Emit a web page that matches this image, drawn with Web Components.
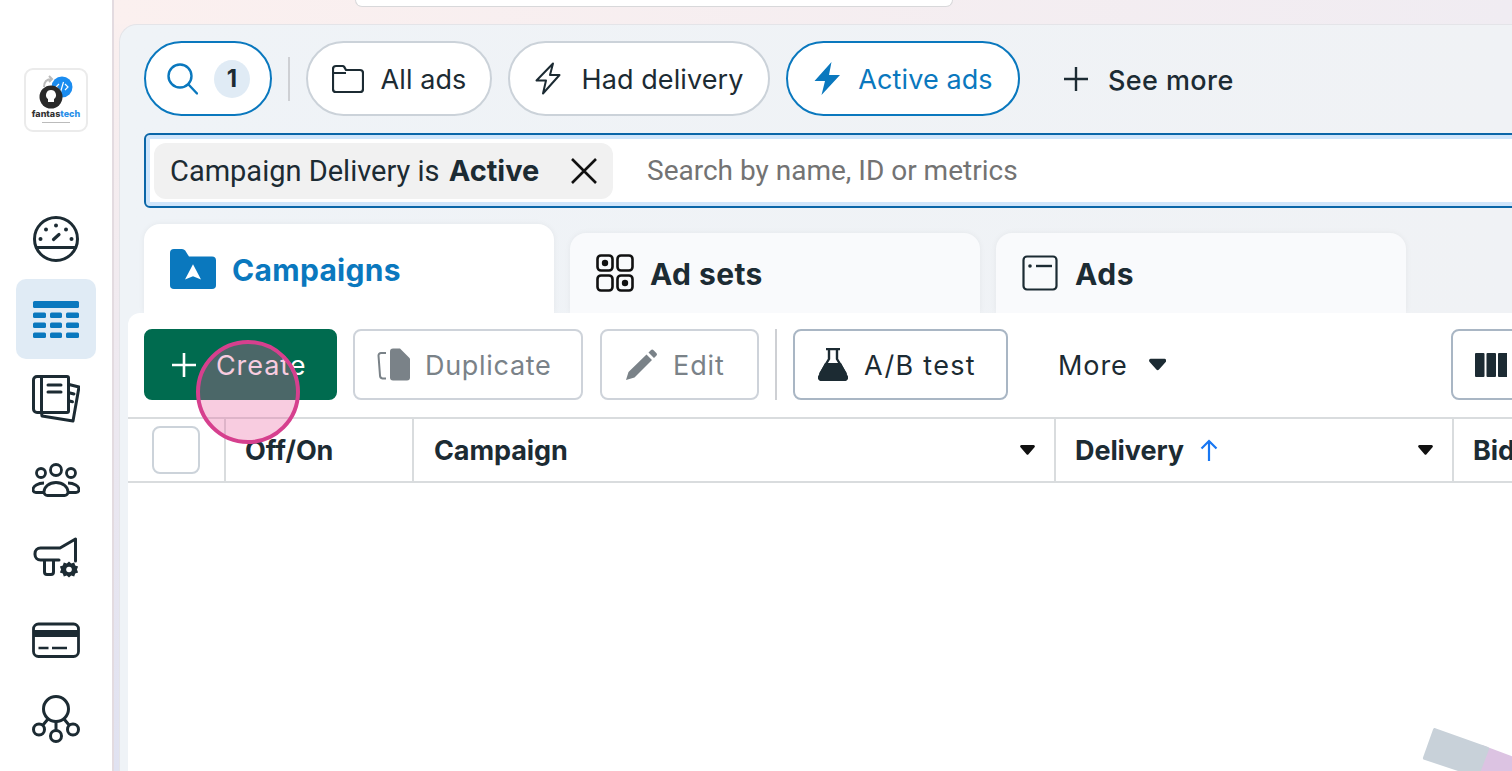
<!DOCTYPE html>
<html lang="en">
<head>
<meta charset="utf-8">
<title>Ads Manager</title>
<style>
  html, body { margin: 0; height: 100%; overflow: hidden; background: #fff; }
  body { font-family: Inter, "Liberation Sans", sans-serif; color: #1c2b33; }
  svg { display: block; }
</style>
</head>
<body>
<ads-app>
  <ads-sidebar slot="side">
    <ads-logo></ads-logo>
    <side-item>
      <svg width="48" height="48" viewBox="0 0 48 48" fill="none" stroke="#1c2b33" stroke-width="3"><circle cx="24" cy="24" r="21.5"/><path d="M3.5 32.5h41"/><path d="M21.5 24.5l5.5-5" stroke-linecap="round" stroke-width="3.2"/><g fill="#1c2b33" stroke="none"><circle cx="8.5" cy="24" r="2"/><circle cx="14" cy="14.5" r="2"/><circle cx="24" cy="10.5" r="2"/><circle cx="34" cy="14.5" r="2"/><circle cx="39.5" cy="24" r="2"/></g></svg>
    </side-item>
    <side-item active>
      <svg width="48" height="48" viewBox="0 0 48 48" fill="#0a78be"><rect x="1" y="6" width="46" height="7" rx="1.5"/><rect x="1" y="17.500" width="13" height="5.600" rx="1.500"/><rect x="18" y="17.500" width="12" height="5.600" rx="1.500"/><rect x="34" y="17.500" width="13" height="5.600" rx="1.500"/><rect x="1" y="27.500" width="13" height="5.600" rx="1.500"/><rect x="18" y="27.500" width="12" height="5.600" rx="1.500"/><rect x="34" y="27.500" width="13" height="5.600" rx="1.500"/><rect x="1" y="37.500" width="13" height="5.600" rx="1.500"/><rect x="18" y="37.500" width="12" height="5.600" rx="1.500"/><rect x="34" y="37.500" width="13" height="5.600" rx="1.500"/></svg>
    </side-item>
    <side-item>
      <svg width="48" height="48" viewBox="0 0 48 48" fill="none" stroke="#1c2b33" stroke-width="3" stroke-linejoin="round" stroke-linecap="round"><path d="M35 1.500H5a3.500 3.500 0 0 0-3.500 3.500v29a3.500 3.500 0 0 0 3.500 3.500h30a1.500 1.500 0 0 0 1.500-1.500V3a1.500 1.500 0 0 0-1.500-1.500z"/><path d="M9.500 2v35"/><path d="M16 10h13M16 17h13"/><path d="M37 9.500l10 2.500-6 34-31-5-.5-3.500"/><path d="M38 18l4 1M37.500 26l3 .8"/></svg>
    </side-item>
    <side-item>
      <svg width="48" height="48" viewBox="0 0 48 48" fill="none" stroke="#1c2b33" stroke-width="2.800"><circle cx="24" cy="15" r="5.500"/><circle cx="9" cy="18" r="4.500"/><circle cx="39" cy="18" r="4.500"/><path d="M15.500 40.500h17a3.500 3.500 0 0 0 3.500-3.500c0-5-5-9.500-12-9.500s-12 4.500-12 9.500a3.500 3.500 0 0 0 3.500 3.500z"/><path d="M12 28c-6 0-11 3-11 6.500 0 2 1.500 3 3 3h7"/><path d="M36 28c6 0 11 3 11 6.500 0 2-1.500 3-3 3h-7"/></svg>
    </side-item>
    <side-item>
      <svg width="48" height="48" viewBox="0 0 48 48" fill="none" stroke="#1c2b33" stroke-width="3" stroke-linejoin="round" stroke-linecap="round"><path d="M27 25H8.500A5.500 5.500 0 0 1 3 19.500v-1A5.500 5.500 0 0 1 8.500 13H28L43.500 4V26"/><path d="M12.500 25.500V37a2.500 2.500 0 0 0 2.500 2.500h4a2.500 2.500 0 0 0 2.500-2.500V25.500"/><path d="M37 26.500l2.200 2 3-1 1 2.900 2.900 1.200-1.200 2.900 1.200 2.900-2.900 1.200-1 2.900-3-1-2.200 2-2.200-2-3 1-1-2.900-2.900-1.200 1.200-2.900-1.200-2.900 2.900-1.200 1-2.900 3 1z" fill="#1c2b33" stroke="none"/><circle cx="37" cy="34.500" r="2.800" fill="#fff" stroke="none"/></svg>
    </side-item>
    <side-item>
      <svg width="48" height="48" viewBox="0 0 48 48" fill="none" stroke="#1c2b33" stroke-width="2.800"><rect x="1.500" y="9" width="45" height="32.500" rx="5"/><path d="M1.500 18.500h45" stroke-width="7"/><path d="M6.500 33h10M20 33h15" stroke-width="2.600"/></svg>
    </side-item>
    <side-item>
      <svg width="48" height="48" viewBox="0 0 48 48" fill="none" stroke="#1c2b33" stroke-width="3"><circle cx="24" cy="14" r="12.500"/><circle cx="7" cy="34.500" r="5.500"/><circle cx="41" cy="34.500" r="5.500"/><circle cx="24" cy="41" r="5.500"/><path d="M24 26.500v9M16 24l-5 6M32 24l5 6"/></svg>
    </side-item>
  </ads-sidebar>

  <ads-panel slot="panel">
    <ads-filter-row slot="top">
      <filter-pill style="width:128px" active>
        <svg width="32" height="34" viewBox="0 0 32 34" fill="none" stroke="#0a78be" stroke-width="2.400" stroke-linecap="round"><circle cx="14" cy="14" r="11.500"/><path d="M22.500 22.500l8.500 9"/></svg>
        <count-badge style="margin-left:-1px">1</count-badge>
      </filter-pill>
      <row-divider></row-divider>
      <filter-pill style="width:186px">
        <svg width="32" height="30" viewBox="1 0 32 30" fill="none" stroke="#1c2b33" stroke-width="2.200" stroke-linejoin="round"><path d="M2 5a3 3 0 0 1 3-3h6.500a2 2 0 0 1 1.700.9L15 6h14a3 3 0 0 1 3 3v16a3 3 0 0 1-3 3H5a3 3 0 0 1-3-3z"/><path d="M2 9h13"/></svg>
        All ads
      </filter-pill>
      <filter-pill style="width:262px;gap:19px">
        <svg width="28" height="33" viewBox="0 0 28 33" fill="none" stroke="#1c2b33" stroke-width="2" stroke-linejoin="round"><path d="M19 1.500L2.500 18.500H12L9 31.500 25.500 13H16z"/></svg>
        Had delivery
      </filter-pill>
      <filter-pill style="width:234px" active blue>
        <svg width="28" height="33" viewBox="0 0 28 33" fill="#0a78be"><path d="M18.500 0L1.500 19H12L8.500 33 27 13H16z"/></svg>
        Active ads
      </filter-pill>
      <see-more>See more</see-more>
    </ads-filter-row>

    <ads-search-box slot="top">
      <filter-chip>Campaign Delivery is <b>Active</b></filter-chip>
      Search by name, ID or metrics
    </ads-search-box>

    <ads-tabs slot="top">
      <ads-tab active>
        <svg width="46" height="40" viewBox="0 0 46 42" preserveAspectRatio="none"><path fill="#0a78be" d="M0 4a4 4 0 0 1 4-4h8a4 4 0 0 1 3.200 1.600L19 8h23a4 4 0 0 1 4 4v26a4 4 0 0 1-4 4H4a4 4 0 0 1-4-4z"/><path fill="#fff" d="M23 16l8 16-8-3.500-8 3.500z"/></svg>
        Campaigns
      </ads-tab>
      <ads-tab style="letter-spacing:.4px">
        <svg width="38" height="38" viewBox="0 0 38 38" fill="none" stroke="#111" stroke-width="2.600"><rect x="1.500" y="1.500" width="15" height="15" rx="3.500"/><rect x="21.500" y="1.500" width="15" height="15" rx="3.500"/><rect x="1.500" y="21.500" width="15" height="15" rx="3.500"/><rect x="21.500" y="21.500" width="15" height="15" rx="3.500"/><circle cx="9" cy="9" r="3.200" fill="#111" stroke="none"/><circle cx="29" cy="29" r="3.200" fill="#111" stroke="none"/></svg>
        Ad sets
      </ads-tab>
      <ads-tab style="letter-spacing:.6px;gap:17px">
        <svg width="36" height="36" viewBox="0 0 36 36" fill="none" stroke="#1c2b33" stroke-width="2.200"><rect x="1.500" y="1.500" width="33" height="33" rx="3.500"/><circle cx="8" cy="11" r="1.800" fill="#1c2b33" stroke="none"/><path d="M14 11h16" stroke-width="2.400"/></svg>
        Ads
      </ads-tab>
    </ads-tabs>

    <ads-content>
      <ads-toolbar>
        <tool-button style="width:193px;padding-left:26px;gap:20px" primary>
          <svg width="24" height="24" viewBox="0 0 24 24" stroke="#fff" stroke-width="2.600"><path d="M12 0v24M0 12h24"/></svg>
          Create
        </tool-button>
        <tool-button style="width:230px;padding-left:22px;gap:15px;letter-spacing:.7px" disabled>
          <svg width="33" height="34" viewBox="0 0 33 34" fill="#7a8288"><path d="M13 2a3 3 0 0 1 3-3h7l10 10v19a3 3 0 0 1-3 3H16a3 3 0 0 1-3-3z" transform="translate(0 1.500)"/><path d="M9 5L4 5a2.500 2.500 0 0 0-2.500 2.500l1.500 20a3 3 0 0 0 2.500 3H9" fill="none" stroke="#7a8288" stroke-width="2"/></svg>
          Duplicate
        </tool-button>
        <tool-button style="width:159px;padding-left:23px;margin-left:1px;gap:16px" disabled>
          <svg width="32" height="32" viewBox="0 0 32 32" fill="#7a8288"><path d="M21.500 5.500l5.500 5.500L9.500 28.500 1 31l2.500-8zM23.500 3.500l2.300-2.300a2 2 0 0 1 2.800 0l2.700 2.700a2 2 0 0 1 0 2.800L29 9z"/></svg>
          Edit
        </tool-button>
        <row-divider style="height:71px"></row-divider>
        <tool-button style="width:215px;padding-left:23px;gap:16px;letter-spacing:1.300px">
          <svg width="30" height="33" viewBox="0 0 30 33" fill="#1c2b33"><path d="M8 1h14M11 2v9L2 26" fill="none" stroke="#1c2b33" stroke-width="2.400"/><path d="M19 2v9l9 15" fill="none" stroke="#1c2b33" stroke-width="2.400"/><path d="M7 15h16l6.500 12.500A3.500 3.500 0 0 1 26 33H4a3.500 3.500 0 0 1-3.500-5.500z"/></svg>
          A/B test
        </tool-button>
        <tool-button style="width:110px;margin-left:34px;padding-left:0;gap:21px" plain>
          More
          <svg slot="after" width="20" height="13" viewBox="0 0 20 13" fill="#1c2b33"><path d="M2 0h16a2 2 0 0 1 1.500 3.200l-8 9a2 2 0 0 1-3 0l-8-9A2 2 0 0 1 2 0z"/></svg>
        </tool-button>
        <tool-button style="width:120px;margin-left:267px;padding-left:22px">
          <svg width="32" height="24" viewBox="0 0 32 24" fill="#1c2b33"><rect width="9.500" height="24" rx="1"/><rect x="11.500" width="9.500" height="24" rx="1"/><rect x="23" width="9.500" height="24" rx="1"/></svg>
        </tool-button>
      </ads-toolbar>

      <ads-table-head>
        <head-cell style="width:96px;border:0;padding-left:24px"><head-check></head-check></head-cell>
        <head-cell style="width:188px">Off/On</head-cell>
        <head-cell style="width:642px;padding-left:20px" caret>Campaign</head-cell>
        <head-cell style="width:398px" caret>Delivery
          <svg width="18" height="22" viewBox="0 0 18 22" fill="none" stroke="#1877f2" stroke-width="2.200" style="margin-left:16px"><path d="M9 22V2M1.500 9.500L9 2l7.500 7.500"/></svg>
        </head-cell>
        <head-cell style="width:300px">Bid strategy</head-cell>
      </ads-table-head>
    </ads-content>
  </ads-panel>

  <click-marker slot="over"></click-marker>
  <corner-shape slot="over"></corner-shape>
</ads-app>

<script>
(function () {
  // small helper, every element is just a template in an open shadow root
  function define(name, html) {
    let tmpl = document.createElement('template');
    tmpl.innerHTML = html;
    customElements.define(name, class extends HTMLElement {
      constructor() {
        super();
        this.attachShadow({ mode: 'open' }).appendChild(tmpl.content.cloneNode(true));
      }
    });
  }

  define('ads-app', `
    <style>
      :host { display: flex; width: 1512px; height: 771px; overflow: hidden; position: relative; }
      .main { flex: 1; min-width: 0; display: flex; flex-direction: column;
        background: linear-gradient(to bottom, #fbf0ef, #e0e2f1); padding-left: 5px; }
      .topbar { height: 24px; flex: none; margin-left: -5px; padding-left: 241px;
        background: linear-gradient(to right, #fbf0ef, #f0ecf2); box-sizing: border-box; }
      .topinput { width: 598px; height: 7px; box-sizing: border-box; background: #fff;
        border: 1px solid #d8d8da; border-top: 0; border-radius: 0 0 9px 9px; }
    </style>
    <slot name="side"></slot>
    <div class="main">
      <div class="topbar"><div class="topinput"></div></div>
      <slot name="panel"></slot>
    </div>
    <slot name="over"></slot>
  `);

  define('ads-sidebar', `
    <style>
      :host { display: flex; flex-direction: column; align-items: center; flex: none; box-sizing: border-box;
        width: 114px; height: 771px; padding-top: 68px; background: #fff; border-right: 2px solid #e3dbe0; }
    </style>
    <slot></slot>
  `);

  define('ads-logo', `
    <style>
      :host { display: block; width: 64px; height: 64px; margin-bottom: 67px; box-sizing: border-box;
        border: 2px solid #ebebeb; border-radius: 9px; background: #fff; position: relative; flex: none; }
      svg { display: block; filter: blur(.3px); }
      .name { position: absolute; left: 0; right: 0; top: 39px; text-align: center; font: 800 9px/9px Inter, sans-serif;
        color: #333; }
      .name i { font-style: normal; color: #2a8fe8; }
    </style>
    <svg width="60" height="60" viewBox="0 0 60 60">
      <path d="M18 17c0-5 3-8 8-8M23 6l3 3-3 3" fill="none" stroke="#bbb" stroke-width="2"/>
      <circle cx="36" cy="17" r="10.500" fill="#1a8cf0"/>
      <path d="M33 14l-3 3 3 3M39 14l3 3-3 3M37.500 12l-3 10" fill="none" stroke="#fff" stroke-width="1.200"/>
      <circle cx="25" cy="27" r="11.500" fill="#2a2a2a"/>
      <path d="M25 20a5 5 0 0 0-3 9v3h6v-3a5 5 0 0 0-3-9z" fill="#fff"/>
      <rect x="16" y="52" width="28" height="1" fill="#bbb"/>
    </svg>
    <div class="name">fantas<i>tech</i></div>
  `);

  define('side-item', `
    <style>
      :host { display: flex; align-items: center; justify-content: center; width: 80px; height: 80px;
        flex: none; border-radius: 10px; }
      :host([active]) { background: #e0ebf5; }
    </style>
    <slot></slot>
  `);

  define('ads-panel', `
    <style>
      :host { display: flex; flex-direction: column; flex: 1; min-height: 0; box-sizing: border-box;
        padding: 16px 0 0 8px; background: linear-gradient(to right, #eff3f7, #f0f2f5); border: 1px solid #e4e4e8;
        border-width: 1px 0 0 1px; border-radius: 18px 0 0 0; overflow: hidden; }
      .indent { padding-left: 16px; }
    </style>
    <div class="indent"><slot name="top"></slot></div>
    <slot></slot>
  `);

  define('ads-filter-row', `
    <style>
      :host { display: flex; align-items: center; height: 75px; gap: 16px; }
      ::slotted(row-divider) { height: 44px; }
    </style>
    <slot></slot>
  `);

  define('filter-pill', `
    <style>
      :host { display: flex; align-items: center; justify-content: center; gap: 17px; flex: none; box-sizing: border-box;
        height: 75px; padding-top: 2px; border: 2px solid #cbd2d9; border-radius: 38px; background: #fff;
        font: 400 27px Inter, sans-serif; letter-spacing: .1px; color: #1c2b33; }
      :host([active]) { border-color: #0a78be; }
      :host([blue]) { color: #0a78be; }
      ::slotted(svg) { margin-top: -2px; }
      ::slotted(count-badge) { margin-top: -2px; }
    </style>
    <slot></slot>
  `);

  define('count-badge', `
    <style>
      :host { display: flex; align-items: center; justify-content: center; width: 36px; height: 38px;
        border-radius: 50%; background: #e0ebf5; font: 700 24px Inter, sans-serif; color: #1c2b33; }
    </style>
    <slot></slot>
  `);

  define('row-divider', `
    <style>
      :host { display: block; width: 2px; background: #ced0d4; flex: none; }
    </style>
  `);

  define('see-more', `
    <style>
      :host { display: flex; align-items: center; gap: 20px; margin-left: 28px; padding-top: 3px; font: 500 27px Inter, sans-serif;
        letter-spacing: .4px; color: #1c2b33; }
      svg { margin-top: -3px; }
    </style>
    <svg width="24" height="24" viewBox="0 0 24 24" stroke="#1c2b33" stroke-width="2.400"><path d="M12 0v24M0 12h24"/></svg>
    <slot></slot>
  `);

  // runs past the right edge of the window, like in the real app
  define('ads-search-box', `
    <style>
      :host { display: flex; align-items: center; box-sizing: border-box; height: 75px; margin-top: 17px; margin-right: -20px;
        border: 2px solid #0a66a8; border-radius: 6px; background: #fff;
        box-shadow: inset 0 0 0 4px #cfe5fb; padding-left: 8px;
        font: 400 28px Roboto, sans-serif; color: #737373; white-space: nowrap; }
    </style>
    <slot></slot>
  `);

  define('filter-chip', `
    <style>
      :host { display: flex; align-items: center; box-sizing: border-box; width: 459px; height: 56px;
        padding-left: 16px; margin-right: 34px; border-radius: 12px; background: #f1f1f1; flex: none;
        font: 400 29px Roboto, sans-serif; color: #1c2b33; white-space: pre; }
      ::slotted(b) { font: 700 29px Inter, sans-serif; margin-left: 2px; }
      svg { margin-left: 32px; }
    </style>
    <slot></slot>
    <svg width="26" height="26" viewBox="0 0 26 26" stroke="#111" stroke-width="2.600"><path d="M1 1l24 24M25 1L1 25"/></svg>
  `);

  define('ads-tabs', `
    <style>
      :host { display: flex; align-items: flex-end; gap: 16px; height: 89px; margin-top: 16px; }
    </style>
    <slot></slot>
  `);

  define('ads-tab', `
    <style>
      :host { display: flex; align-items: center; gap: 16px; box-sizing: border-box; width: 410px; height: 80px;
        padding: 2px 0 0 26px; background: #f9fafc; border-radius: 16px 16px 0 0;
        box-shadow: 0 0 6px rgba(0,0,0,.05); font: 700 30px Inter, sans-serif; letter-spacing: .3px; color: #1c2b33; }
      :host([active]) { height: 89px; background: #fff; color: #0a78be; }
      ::slotted(svg) { margin-top: -2px; }
    </style>
    <slot></slot>
  `);

  define('ads-content', `
    <style>
      :host { display: block; flex: 1; background: #fff; border-radius: 12px 0 0 0; position: relative; }
    </style>
    <slot></slot>
  `);

  define('ads-toolbar', `
    <style>
      :host { display: flex; align-items: flex-start; gap: 16px; height: 104px; box-sizing: border-box;
        padding: 16px 0 0 16px; white-space: nowrap; }
    </style>
    <slot></slot>
  `);

  define('tool-button', `
    <style>
      :host { display: flex; align-items: center; gap: 17px; box-sizing: border-box; flex: none;
        height: 71px; padding-top: 2px; border: 2px solid #a9b6c4; border-radius: 8px; background: #fff;
        font: 400 27px Inter, sans-serif; letter-spacing: .9px; color: #1c2b33; }
      :host([primary]) { background: #006b4f; border-color: #006b4f; color: #fff; }
      :host([disabled]) { border-color: #ced3da; color: #7a8288; }
      :host([plain]) { border-color: transparent; background: none; gap: 20px; border-left: 0; }
      ::slotted(svg) { margin-top: -2px; }
    </style>
    <slot></slot><slot name="after"></slot>
  `);

  define('ads-table-head', `
    <style>
      :host { display: flex; height: 66px; box-sizing: border-box; border: solid #d9dcde; border-width: 2px 0; }
    </style>
    <slot></slot>
  `);

  define('head-cell', `
    <style>
      :host { display: flex; align-items: center; box-sizing: border-box; flex: none; padding: 0 20px 0 19px;
        border-left: 2px solid #d9dcde; font: 700 27px Inter, sans-serif; letter-spacing: -.1px; color: #1c2b33; white-space: nowrap; }
      .caret { display: none; margin-left: auto; margin-right: -1px; }
      :host([caret]) .caret { display: block; }
    </style>
    <slot></slot>
    <svg class="caret" width="15" height="10" viewBox="0 0 15 10" fill="#111"><path d="M1.500 0h12a1.400 1.400 0 0 1 1 2.300l-6 7a1.400 1.400 0 0 1-2 0l-6-7A1.400 1.400 0 0 1 1.500 0z"/></svg>
  `);

  define('head-check', `
    <style>
      :host { display: block; width: 48px; height: 48px; box-sizing: border-box; border: 2px solid #ccd3da;
        border-radius: 8px; background: #fff; }
    </style>
  `);

  // the pink ring of the screen recording, it lies over the page
  define('click-marker', `
    <style>
      :host { position: absolute; left: 196px; top: 340px; width: 104px; height: 104px; box-sizing: border-box;
        border: 4px solid #d6408e; border-radius: 50%; background: rgba(232,95,160,.32); }
    </style>
  `);

  define('corner-shape', `
    <style>
      :host { position: absolute; left: 1412px; top: 720px; width: 100px; height: 51px; overflow: hidden; }
      svg { display: block; filter: blur(.5px); }
    </style>
    <svg width="100" height="52" viewBox="0 0 100 52">
      <path d="M70 25l32 12v16H56z" fill="#dcc3e2"/>
      <path d="M24 8.500l52 18.500a2 2 0 0 1 1 2.500L68 53H52L11.500 39.500a2 2 0 0 1-.5-2L21 9.500a2 2 0 0 1 3-1z" fill="#c8d1d9"/>
    </svg>
  `);
})();
</script>
</body>
</html>
